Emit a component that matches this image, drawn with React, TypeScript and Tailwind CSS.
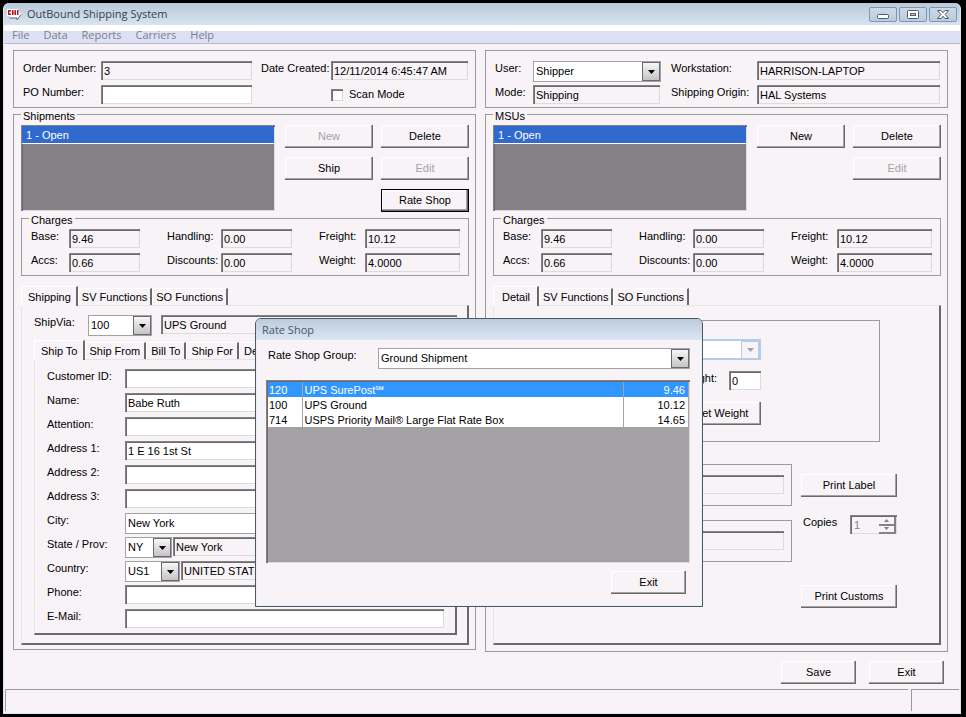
import { type ReactNode } from "react";

const SUNKEN =
  "shadow-[inset_1px_1px_0_#848284,inset_2px_2px_0_#6b696b,inset_-1px_-1px_0_#dedade]";

function Field({
  id,
  value = "",
  editable = false,
  className = "",
  label,
}: {
  id: string;
  value?: string;
  editable?: boolean;
  className?: string;
  label?: string;
}) {
  return (
    <input
      id={id}
      type="text"
      aria-label={label}
      defaultValue={value}
      readOnly={!editable}
      className={`h-[19px] min-w-0 px-[3px] pt-px leading-4 outline-none ${SUNKEN} ${
        editable ? "bg-white" : "bg-transparent"
      } ${className}`}
    />
  );
}

function Arrow({ muted = false }: { muted?: boolean }) {
  return (
    <svg width="7" height="4" viewBox="0 0 7 4" aria-hidden="true">
      <path d="M0 0h7L3.5 4z" fill={muted ? "#a5a2a5" : "#000"} />
    </svg>
  );
}

function Combo({
  id,
  value,
  className = "",
  muted = false,
}: {
  id: string;
  value: string;
  className?: string;
  muted?: boolean;
}) {
  return (
    <div
      className={`grid h-[21px] bg-white ${
        muted ? "border-2 border-[#b5cbe7]" : "border border-[#a5a2a5]"
      } ${className}`}
    >
      <select
        id={id}
        defaultValue={value}
        disabled={muted}
        className="col-start-1 row-start-1 w-full min-w-0 appearance-none bg-transparent px-[2px] pb-[2px] leading-4 outline-none"
      >
        <option>{value}</option>
      </select>
      <span
        className={`pointer-events-none col-start-1 row-start-1 flex w-[18px] items-center justify-center justify-self-end border ${
          muted
            ? "border-[#b5cbe7] bg-[#f7f3f7]"
            : "border-[#6b696b] bg-linear-to-b from-[#f7f7f7] to-[#c6c3c6]"
        }`}
      >
        <Arrow muted={muted} />
      </span>
    </div>
  );
}

function Button({
  children,
  className = "w-[88px]",
  disabled = false,
  focused = false,
}: {
  children: ReactNode;
  className?: string;
  disabled?: boolean;
  focused?: boolean;
}) {
  return (
    <button
      type="button"
      disabled={disabled}
      className={`h-[23px] shrink-0 pb-[2px] text-center leading-4 ${
        focused ? "border border-black" : ""
      } shadow-[inset_-1px_-1px_0_#6b696b,inset_-2px_-2px_0_#a5a2a5,inset_1px_1px_0_#fff] ${
        disabled ? "text-[#a5a2a5]" : ""
      } ${className}`}
    >
      {children}
    </button>
  );
}

function Group({
  title,
  className = "",
  legendClassName = "",
  children,
}: {
  title: string;
  className?: string;
  legendClassName?: string;
  children: ReactNode;
}) {
  return (
    <fieldset className={`-mt-[2px] min-w-0 border border-[#9c9a9c] pt-[3px] ${className}`}>
      <legend className={`px-[2px] pt-1 leading-3 ${legendClassName}`}>{title}</legend>
      {children}
    </fieldset>
  );
}

function Tabs({ tabs, compact = false }: { tabs: string[]; compact?: boolean }) {
  return (
    <div role="tablist" className="relative z-10 flex h-5 items-end overflow-hidden">
      {tabs.map((tab, i) => (
        <button
          key={tab}
          type="button"
          role="tab"
          aria-selected={i === 0}
          className={`shrink-0 border-t border-l border-r-2 border-t-white border-l-white border-r-[#6b696b] leading-4 ${
            i === 0
              ? "h-5 min-w-[46px] bg-[#f7f3f7] pr-[5px] pl-[6px]"
              : `mb-px h-[17px] ${compact ? "px-1" : "px-[3px]"}`
          }`}
        >
          {tab}
        </button>
      ))}
    </div>
  );
}

const TAB_BODY =
  "-mt-px border-t border-l border-r-2 border-b-2 border-t-[#e7e3e7] border-l-[#e7e3e7] border-r-[#6b696b] border-b-[#6b696b]";

function ListBox({ label }: { label: string }) {
  return (
    <ul
      role="listbox"
      aria-label={label}
      className={`h-[86px] w-[254px] shrink-0 bg-[#848284] p-px ${SUNKEN}`}
    >
      <li
        role="option"
        aria-selected="true"
        className="h-[18px] border-b border-white bg-[#316acd] pl-1 leading-[18px] text-white"
      >
        1 - Open
      </li>
    </ul>
  );
}

function Charges({ prefix }: { prefix: string }) {
  const cells: [string, string, boolean][] = [
    ["Base", "9.46", false],
    ["Handling", "0.00", false],
    ["Freight", "10.12", true],
    ["Accs", "0.66", false],
    ["Discounts", "0.00", false],
    ["Weight", "4.0000", true],
  ];
  return (
    <Group title="Charges" className="pb-[3px]" legendClassName="ml-[7px]">
      <div className="grid grid-cols-[38px_98px_54px_98px_46px_1fr] gap-y-[5px] pr-[8px] pl-[9px]">
        {cells.map(([name, value, wide]) => (
          <div key={name} className="contents">
            <label htmlFor={prefix + name} className="leading-[14px] whitespace-nowrap">
              {name}:
            </label>
            <Field id={prefix + name} value={value} className={wide ? "w-full" : "w-[71px]"} />
          </div>
        ))}
      </div>
    </Group>
  );
}

function Row({ id, label, children }: { id: string; label: string; children: ReactNode }) {
  return (
    <div className="flex h-6 shrink-0 items-start">
      <label htmlFor={id} className="w-[78px] shrink-0 leading-[14px]">
        {label}
      </label>
      {children}
    </div>
  );
}

function OrderPanel() {
  return (
    <section className="flex h-[58px] justify-between border border-[#9c9a9c] pt-[10px] pr-[7px] pl-[9px]">
      <div className="flex flex-col">
        <Row id="order" label="Order Number:">
          <Field id="order" value="3" className="w-[151px]" />
        </Row>
        <Row id="po" label="PO Number:">
          <Field id="po" editable className="w-[151px]" />
        </Row>
      </div>
      <div className="flex w-[207px] flex-col">
        <div className="flex h-6 shrink-0 items-start">
          <label htmlFor="created" className="w-[70px] shrink-0 leading-[14px] whitespace-nowrap">
            Date Created:
          </label>
          <Field id="created" value="12/11/2014 6:45:47 AM" className="w-[137px]" />
        </div>
        <label className="flex h-[19px] items-center gap-[6px] pl-[70px]">
          <input
            type="checkbox"
            className="size-3 appearance-none bg-white shadow-[inset_1px_1px_0_#848284,inset_2px_2px_0_#6b696b,inset_-1px_-1px_0_#dedade]"
          />
          Scan Mode
        </label>
      </div>
    </section>
  );
}

function UserPanel() {
  return (
    <section className="grid h-[58px] grid-cols-[38px_138px_86px_1fr] grid-rows-[24px_24px] items-start border border-[#9c9a9c] pt-[10px] pr-[7px] pl-[9px]">
      <label htmlFor="user" className="leading-[14px]">User:</label>
      <Combo id="user" value="Shipper" className="w-[128px]" />
      <label htmlFor="workstation" className="leading-[14px]">Workstation:</label>
      <Field id="workstation" value="HARRISON-LAPTOP" className="w-full" />
      <label htmlFor="mode" className="leading-[14px]">Mode:</label>
      <Field id="mode" value="Shipping" className="w-[127px]" />
      <label htmlFor="origin" className="leading-[14px]">Shipping Origin:</label>
      <Field id="origin" value="HAL Systems" className="w-full" />
    </section>
  );
}

function ShipTo() {
  return (
    <div className={`${TAB_BODY} pt-[9px] pr-[11px] pl-[12px]`}>
      <Row id="customer" label="Customer ID:">
        <Field id="customer" editable className="flex-1" />
      </Row>
      <Row id="name" label="Name:">
        <Field id="name" editable value="Babe Ruth" className="flex-1" />
      </Row>
      <Row id="attention" label="Attention:">
        <Field id="attention" editable className="flex-1" />
      </Row>
      <Row id="address1" label="Address 1:">
        <Field id="address1" editable value="1 E 16 1st St" className="flex-1" />
      </Row>
      <Row id="address2" label="Address 2:">
        <Field id="address2" editable className="flex-1" />
      </Row>
      <Row id="address3" label="Address 3:">
        <Field id="address3" editable className="flex-1" />
      </Row>
      <Row id="city" label="City:">
        <Combo id="city" value="New York" className="flex-1" />
      </Row>
      <Row id="state" label="State / Prov:">
        <Combo id="state" value="NY" className="mr-px w-[47px]" />
        <Field id="stateName" label="State name" value="New York" className="flex-1" />
      </Row>
      <Row id="country" label="Country:">
        <Combo id="country" value="US1" className="mr-px w-[55px]" />
        <Field id="countryName" label="Country name" value="UNITED STATES" className="flex-1" />
      </Row>
      <Row id="phone" label="Phone:">
        <Field id="phone" editable className="flex-1" />
      </Row>
      <Row id="email" label="E-Mail:">
        <Field id="email" editable className="flex-1" />
      </Row>
    </div>
  );
}

function Shipments() {
  return (
    <Group title="Shipments" className="pr-[6px] pb-1 pl-[7px]">
      <div className="flex items-start justify-between">
        <ListBox label="Shipments" />
        <div className="grid grid-cols-2 gap-x-2 gap-y-[9px]">
          <Button disabled>New</Button>
          <Button>Delete</Button>
          <Button>Ship</Button>
          <Button disabled>Edit</Button>
          <Button focused className="col-start-2 w-[88px]">Rate Shop</Button>
        </div>
      </div>
      <Charges prefix="shipment" />
      <div className="mt-[10px]">
        <Tabs tabs={["Shipping", "SV Functions", "SO Functions"]} />
        <div className={`${TAB_BODY} pt-[9px] pr-[10px] pb-2 pl-[12px]`}>
          <div className="flex h-[21px] items-start">
            <label htmlFor="via" className="w-[54px] leading-[14px]">ShipVia:</label>
            <Combo id="via" value="100" className="mr-[9px] w-[64px]" />
            <Field id="viaName" label="Service" value="UPS Ground" className="flex-1" />
          </div>
          <div className="mt-1">
            <Tabs compact tabs={["Ship To", "Ship From", "Bill To", "Ship For", "Detail"]} />
            <ShipTo />
          </div>
        </div>
      </div>
    </Group>
  );
}

function Msus() {
  return (
    <Group title="MSUs" className="pr-[6px] pb-[6px] pl-[7px]">
      <div className="flex h-[87px] items-start justify-between">
        <ListBox label="MSUs" />
        <div className="grid grid-cols-2 gap-x-2 gap-y-[9px]">
          <Button>New</Button>
          <Button>Delete</Button>
          <Button disabled className="col-start-2 w-[88px]">Edit</Button>
        </div>
      </div>
      <Charges prefix="msu" />
      <div className="mt-[10px]">
        <Tabs tabs={["Detail", "SV Functions", "SO Functions"]} />
        <div className={`${TAB_BODY} pt-[14px] pr-[42px] pb-[35px] pl-[7px]`}>
          <div className="mr-[17px] flex h-[122px] flex-col items-end border border-[#9c9a9c] pt-[18px] pr-[118px]">
            <Combo id="package" value="" muted className="w-[200px]" />
            <div className="mt-[11px] flex items-start gap-3">
              <label htmlFor="weight" className="leading-[14px]">Weight:</label>
              <Field id="weight" editable value="0" className="w-8" />
            </div>
            <Button className="mt-3 w-[80px]">Get Weight</Button>
          </div>
          <div className="mt-[22px] flex items-start gap-[9px]">
            <div className="flex flex-1 flex-col gap-[14px]">
              <div className="flex h-[42px] border border-[#9c9a9c] px-[7px] pt-[10px]">
                <Field id="tracking" label="Tracking number" className="flex-1" />
              </div>
              <div className="flex h-[42px] border border-[#9c9a9c] px-[7px] pt-[10px]">
                <Field id="reference" label="Reference" className="flex-1" />
              </div>
            </div>
            <div className="flex w-24 flex-col pt-[10px]">
              <Button className="w-24">Print Label</Button>
              <div className="mt-[18px] flex items-start justify-between pl-[2px]">
                <label htmlFor="copies" className="leading-[14px]">Copies</label>
                <div className={`flex h-[19px] w-[47px] ${SUNKEN}`}>
                  <input
                    id="copies"
                    type="number"
                    defaultValue={1}
                    disabled
                    className="w-[29px] appearance-none bg-transparent pt-[2px] pl-[4px] text-[#848284] [-moz-appearance:textfield] [&::-webkit-inner-spin-button]:appearance-none"
                  />
                  <div className="flex flex-1 flex-col pt-[2px] pr-px">
                    <span className="flex flex-1 items-center justify-center border-r-2 border-b-2 border-[#848284] bg-[#f7f3f7]">
                      <svg width="5" height="3" viewBox="0 0 5 3" aria-hidden="true">
                        <path d="M0 3h5L2.5 0z" fill="#848284" />
                      </svg>
                    </span>
                    <span className="flex flex-1 items-center justify-center border-r-2 border-b-2 border-[#848284] bg-[#f7f3f7]">
                      <svg width="5" height="3" viewBox="0 0 5 3" aria-hidden="true">
                        <path d="M0 0h5L2.5 3z" fill="#848284" />
                      </svg>
                    </span>
                  </div>
                </div>
              </div>
              <Button className="mt-[51px] w-24">Print Customs</Button>
            </div>
          </div>
        </div>
      </div>
    </Group>
  );
}

const RATES = [
  { code: "120", name: "UPS SurePost℠", price: "9.46" },
  { code: "100", name: "UPS Ground", price: "10.12" },
  { code: "714", name: "USPS Priority Mail® Large Flat Rate Box", price: "14.65" },
];

function RateShopDialog() {
  return (
    <div
      role="dialog"
      aria-labelledby="rateTitle"
      className="absolute top-[318px] left-[255px] z-20 flex w-[448px] flex-col rounded-t-[6px] border border-[#4a5963] bg-[#f7f3f7] shadow-[inset_0_0_0_1px_#e7eff7]"
    >
      <h2
        id="rateTitle"
        className="h-[21px] rounded-t-[5px] bg-linear-to-b from-[#bccbdc] to-[#dbe6f2] pl-[6px] font-['Open_Sans','Noto_Sans',sans-serif] text-[11px] leading-[22px] text-[#4a5563]"
      >
        Rate Shop
      </h2>
      <div className="flex flex-col pt-2 pr-[12px] pb-3 pl-[10px]">
        <div className="flex items-start pl-[2px]">
          <label htmlFor="rateGroup" className="w-[110px] leading-[14px]">
            Rate Shop Group:
          </label>
          <Combo id="rateGroup" value="Ground Shipment" className="flex-1" />
        </div>
        <div className={`mt-[11px] h-[183px] bg-[#a5a2a5] pt-[2px] pr-[2px] pl-[2px] ${SUNKEN}`}>
          <table className="w-full table-fixed border-collapse leading-[14px]">
            <colgroup>
              <col className="w-[34px]" />
              <col />
              <col className="w-[65px]" />
            </colgroup>
            <tbody>
              {RATES.map((rate, i) => (
                <tr
                  key={rate.code}
                  className={i === 0 ? "h-[15px] bg-[#3196ff] text-white" : "h-[15px] bg-white"}
                >
                  <td className="border-r border-[#a5a2a5] p-0 pt-px pl-px">{rate.code}</td>
                  <td className="border-r border-[#a5a2a5] p-0 pt-px pl-[2px]">{rate.name}</td>
                  <td className="p-0 pt-px pr-[3px] text-right">{rate.price}</td>
                </tr>
              ))}
            </tbody>
          </table>
        </div>
        <Button className="mt-2 mr-[4px] w-[75px] self-end">Exit</Button>
      </div>
    </div>
  );
}

const WINDOW_BUTTON =
  "flex h-[15px] w-7 items-center justify-center rounded-[2px] border border-[#8296ad] bg-linear-to-b from-[#ccd9e7] to-[#bccbdc]";

function TitleBar() {
  return (
    <header className="flex h-[22px] items-center bg-linear-to-b from-[#b9c9da] to-[#d8e4f0] pr-[3px] pl-[3px] font-['Open_Sans','Noto_Sans',sans-serif] text-[#39414a]">
      <svg width="15" height="13" viewBox="0 0 15 13" className="mr-[5px]" aria-hidden="true">
        <path d="M0 1h11v2l3.500 2.500L10.500 11V9.500H3V8H0z" fill="#fff" />
        <path d="M2.500 10h7.500v2l4-5.500" fill="none" stroke="#63697b" />
        <path d="M1 2h3v1.500H2.500v2H4V7H1zM5 2h1.500v5H5zM7.500 2h1.500v5H7.500zM10 2h1.500v5H10z" fill="#b51821" />
        <path d="M6.500 4h1v1.500h-1z" fill="#b51821" />
      </svg>
      <h1 className="flex-1 text-[11px]">OutBound Shipping System</h1>
      <div className="flex gap-[2px]">
        <button type="button" aria-label="Minimize" className={WINDOW_BUTTON}>
          <svg width="12" height="11" viewBox="0 0 12 11" aria-hidden="true">
            <rect x="0.500" y="5.500" width="11" height="4" rx="1" fill="#fff" stroke="#525963" />
          </svg>
        </button>
        <button type="button" aria-label="Maximize" className={WINDOW_BUTTON}>
          <svg width="12" height="11" viewBox="0 0 12 11" aria-hidden="true">
            <rect x="0.500" y="1.500" width="11" height="8" rx="1" fill="#fff" stroke="#525963" />
            <rect x="3.500" y="4.500" width="5" height="2" fill="#c6d3e0" stroke="#525963" />
          </svg>
        </button>
        <button type="button" aria-label="Close" className={WINDOW_BUTTON}>
          <svg width="12" height="11" viewBox="0 0 12 11" aria-hidden="true">
            <path
              d="M0.500 1.500h3.500L6 3.800 8 1.500h3.500L8.200 5.500l3.300 4H8L6 7.200 4 9.500H0.500l3.300-4z"
              fill="#fff"
              stroke="#525963"
            />
          </svg>
        </button>
      </div>
    </header>
  );
}

export default function App() {
  return (
    <div className="relative flex min-h-screen flex-col bg-black pt-[3px] pr-[5px] pb-[3px] pl-[3px] font-['Liberation_Sans',Arial,sans-serif] text-[11px] text-black">
      <div className="flex flex-1 flex-col overflow-hidden rounded-t-[6px] border-x border-b border-[#dee7ef] bg-[#f7f3f7]">
        <TitleBar />
        <nav className="flex h-[19px] items-center gap-[14px] border-b border-[#b5bace] bg-linear-to-b from-white from-30% to-[#dee1f3] to-35% pt-[2px] pl-2 font-['Open_Sans','Noto_Sans',sans-serif] text-[11px] text-[#7b7d8c]">
          {["File", "Data", "Reports", "Carriers", "Help"].map((item) => (
            <button key={item} type="button" className="leading-4">
              {item}
            </button>
          ))}
        </nav>
        <main className="grid grid-cols-2 items-start gap-[9px] pt-[6px] pr-[12px] pl-[9px]">
          <div className="min-w-0">
            <OrderPanel />
            <Shipments />
          </div>
          <div className="min-w-0">
            <UserPanel />
            <Msus />
          </div>
        </main>
        <div className="mt-[9px] flex justify-end gap-[13px] pr-4">
          <Button className="w-[75px]">Save</Button>
          <Button className="w-[75px]">Exit</Button>
        </div>
        <footer className="mt-[5px] flex min-h-[22px] flex-1 gap-[3px] px-px pb-[2px]">
          <div className="flex-1 border-t border-l border-[#9c9a9c]" />
          <div className="w-12 border-t border-l border-[#9c9a9c]" />
        </footer>
      </div>
      <RateShopDialog />
    </div>
  );
}
